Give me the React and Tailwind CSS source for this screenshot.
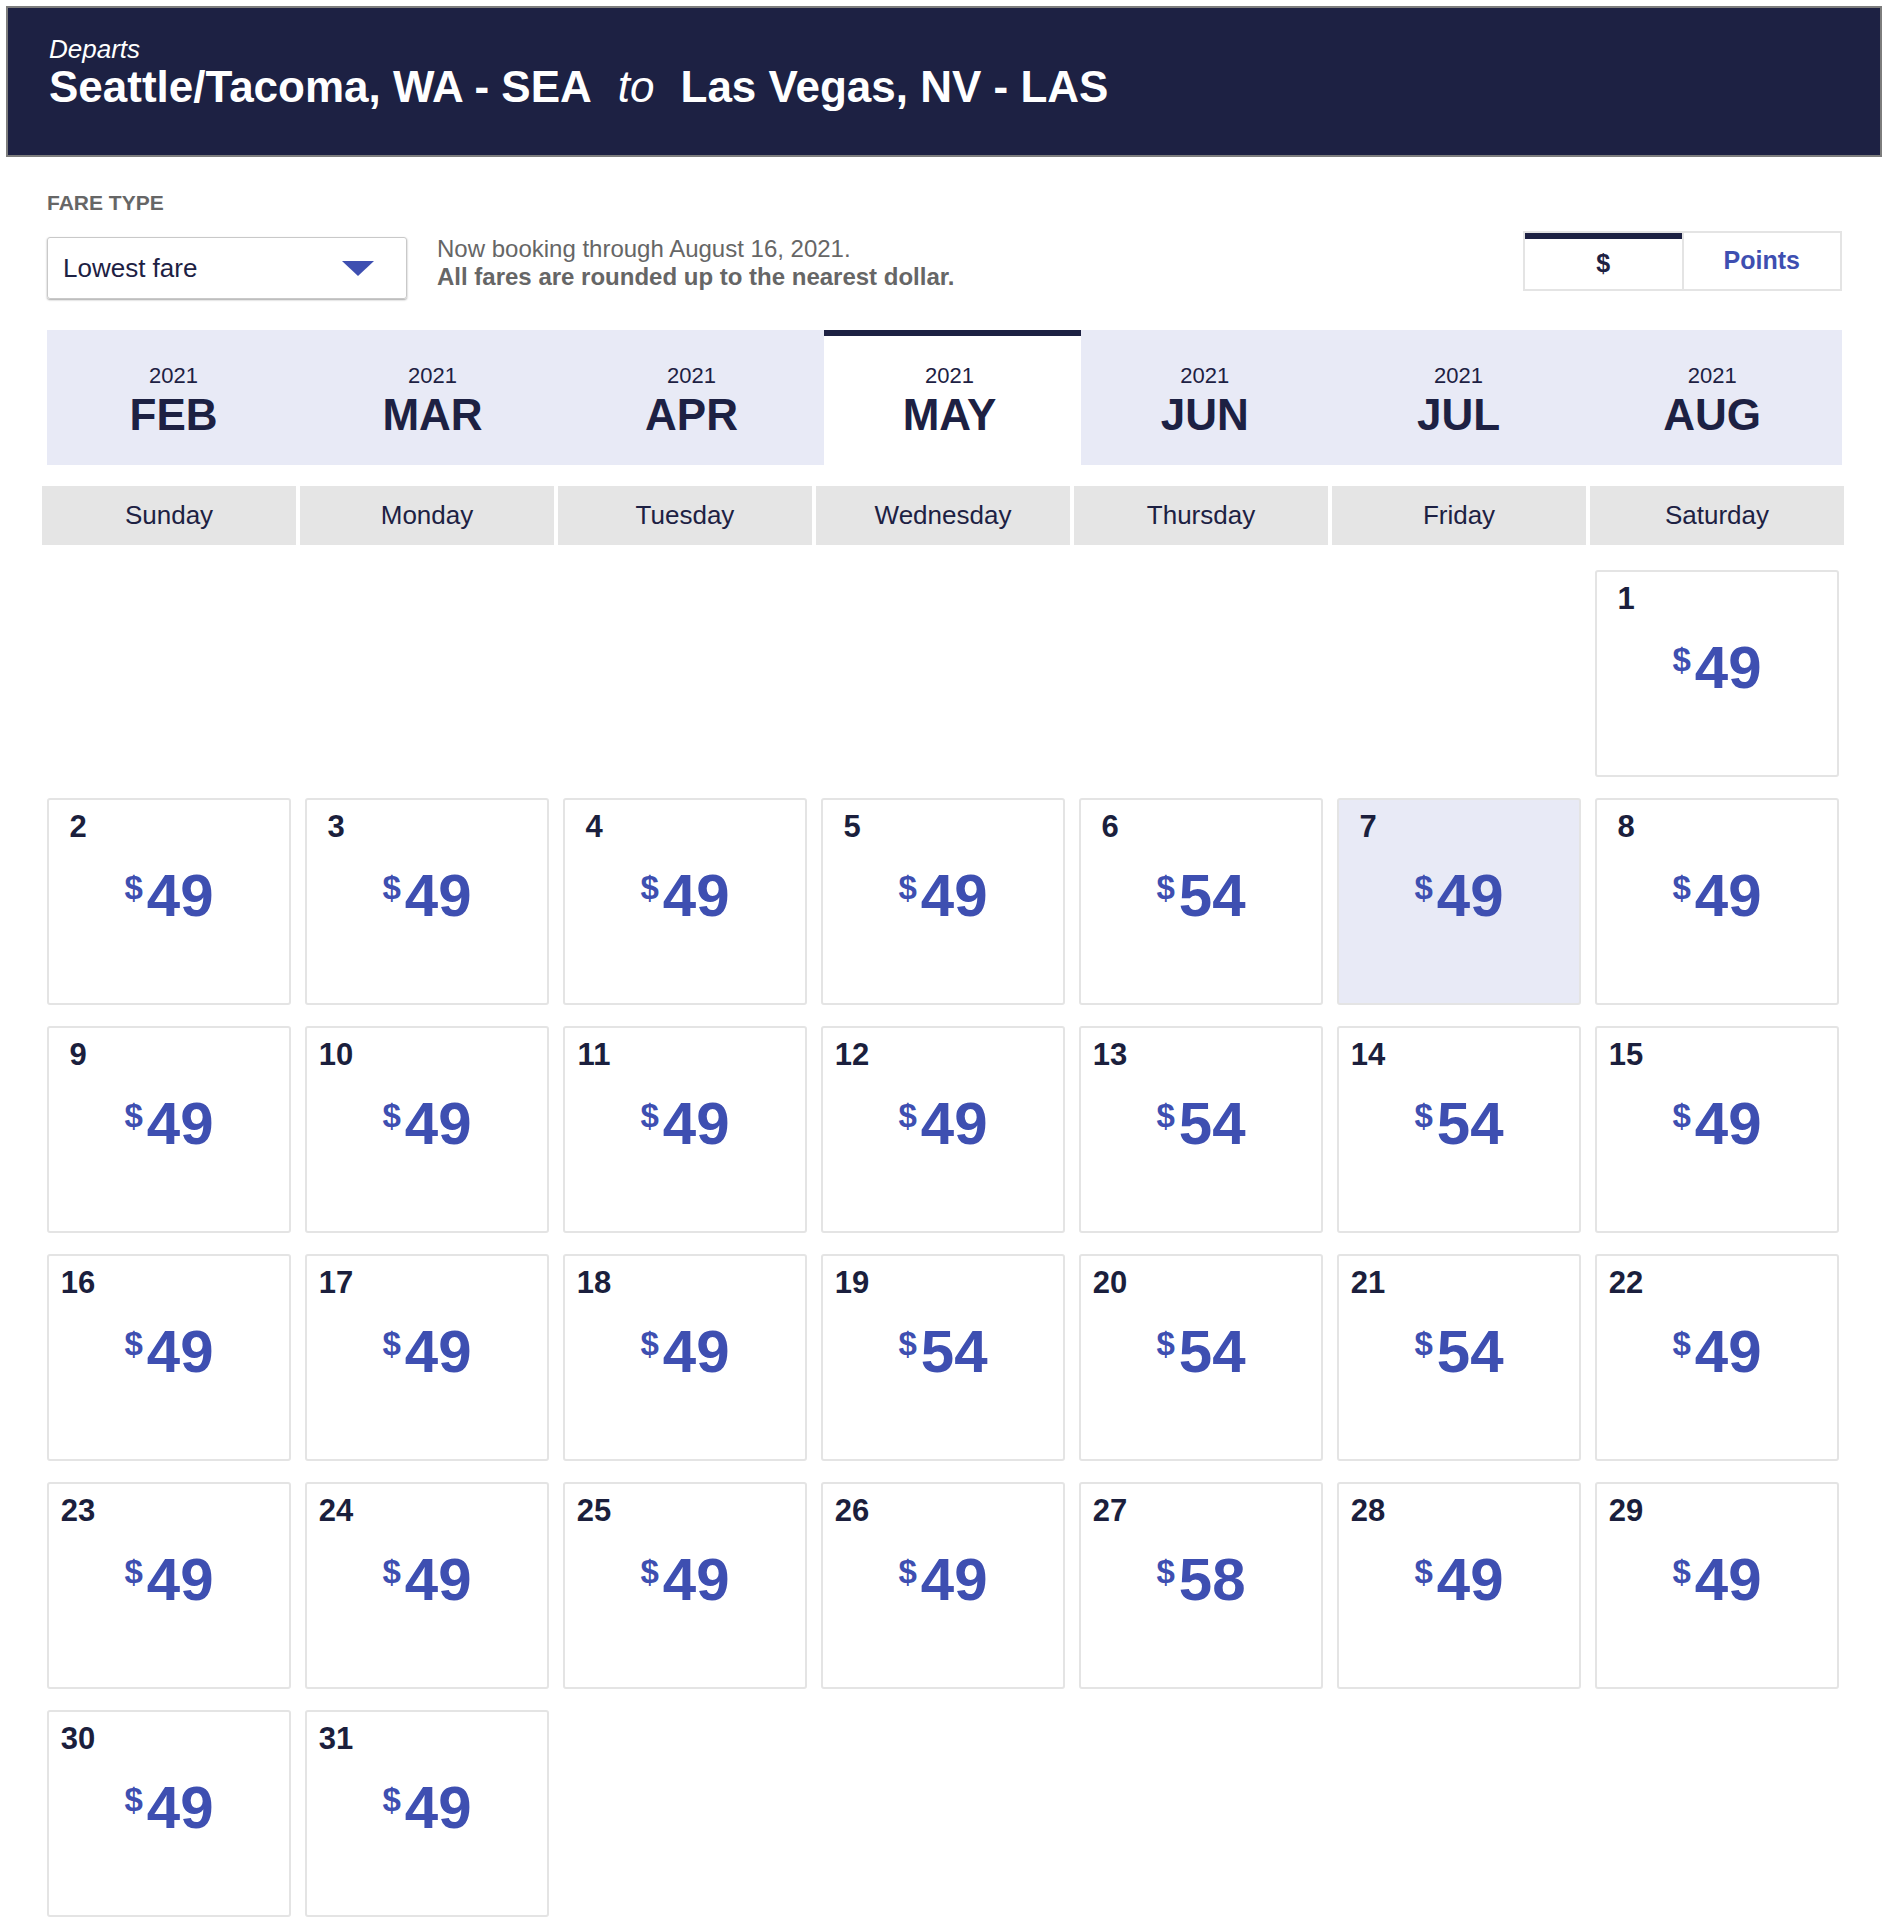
import { useState } from "react";

const MONTHS = ["FEB", "MAR", "APR", "MAY", "JUN", "JUL", "AUG"];
const DAYS = ["Sunday", "Monday", "Tuesday", "Wednesday", "Thursday", "Friday", "Saturday"];

// May 2021 fares, index = day - 1
const FARES = [
  49, 49, 49, 49, 49, 54, 49, 49, 49, 49, 49, 49, 54, 54, 49, 49, 49, 49, 54, 54,
  54, 49, 49, 49, 49, 49, 58, 49, 49, 49, 49,
];

function MonthTab({ label, active }) {
  return (
    <div
      className={
        active
          ? "flex flex-col items-center bg-white border-t-[6px] border-[#1d2143] pt-[29px] pr-[6px]"
          : "flex flex-col items-center pt-[35px] pr-[6px]"
      }
    >
      <div className="text-[22px] leading-[22px]">2021</div>
      <div className="mt-[6px] text-[44px] leading-[44px] font-bold">{label}</div>
    </div>
  );
}

function DayCell({ day, fare, selected }) {
  return (
    <div
      className={`h-[207px] rounded-[3px] border-2 border-[#e4e4e4] pt-[11px] pl-[10px] ${
        selected ? "bg-[#e8eaf6]" : "bg-white"
      }`}
    >
      <div className="w-[38px] text-center text-[31px] leading-[31px] font-bold text-[#1b1f3d]">
        {day}
      </div>
      <div className="mt-[24px] flex justify-center pr-[10px] text-[#3e4fb1] font-bold">
        <span className="mt-[5px] text-[33px] leading-[33px]">$</span>
        <span className="ml-[4px] text-[60px] leading-[60px]">{fare}</span>
      </div>
    </div>
  );
}

export default function App() {
  const [selectedDay] = useState(7);
  const blanks = Array.from({ length: 6 });

  return (
    <div className="w-[1888px] min-h-[1928px] bg-white px-[6px] pt-[6px] font-['Liberation_Sans',Arial,sans-serif] text-[#1d2143]">
      <div className="h-[151px] border-2 border-[#7d7d7d] bg-[#1d2143] pl-[41px] pt-[28px] text-white">
        <div className="text-[26px] leading-[26px] italic">Departs</div>
        <div className="mt-[3px] flex whitespace-pre text-[44px] leading-[44px] font-bold">
          <span>Seattle/Tacoma, WA - SEA</span>
          <span className="mx-[26px] font-normal italic">to</span>
          <span>Las Vegas, NV - LAS</span>
        </div>
      </div>

      <div className="pl-[41px] pr-[40px]">
        <div className="mt-[35px] flex items-start justify-between">
          <div>
            <div className="text-[21px] leading-[21px] font-bold text-[#666666]">FARE TYPE</div>
            <div className="mt-[24px] flex items-start">
              <div className="flex h-[62px] w-[360px] items-center justify-between rounded-[3px] border border-[#c9c9c9] pl-[15px] pr-[32px] shadow-[0_1px_2px_rgba(0,0,0,0.35)]">
                <span className="text-[26px] leading-[26px] text-[#1d2143]">Lowest fare</span>
                <svg width="32" height="15" viewBox="0 0 32 15">
                  <polygon points="0,0 32,0 16,15" fill="#3e4fb1" />
                </svg>
              </div>
              <div className="ml-[30px] -mt-[2px] text-[24px] leading-[28px] text-[#666666]">
                <div>Now booking through August 16, 2021.</div>
                <div className="font-bold">All fares are rounded up to the nearest dollar.</div>
              </div>
            </div>
          </div>

          <div className="mt-[39px] flex h-[60px] w-[319px] border-2 border-[#e4e4e4]">
            <div className="flex flex-1 items-center justify-center border-t-[6px] border-[#1d2143] text-[25px] font-bold text-[#1d2143]">
              $
            </div>
            <div className="w-[2px] bg-[#e4e4e4]" />
            <div className="flex flex-1 items-center justify-center text-[25px] font-bold text-[#3e4fb1]">
              Points
            </div>
          </div>
        </div>

        <div className="mt-[31px] grid h-[135px] grid-cols-[259px_259px_259px_257px_1fr_1fr_1fr] bg-[#e8eaf6]">
          {MONTHS.map((m) => (
            <MonthTab key={m} label={m} active={m === "MAY"} />
          ))}
        </div>

        <div className="-ml-[5px] -mr-[2px] mt-[21px] grid h-[59px] grid-cols-7 gap-[4px]">
          {DAYS.map((d) => (
            <div
              key={d}
              className="flex items-center justify-center bg-[#e5e5e5] text-[26px] text-[#1d2143]"
            >
              {d}
            </div>
          ))}
        </div>

        <div className="mt-[25px] grid w-[1792px] grid-cols-7 gap-x-[14px] gap-y-[21px]">
          {blanks.map((_, i) => (
            <div key={`b${i}`} className="h-[207px]" />
          ))}
          {FARES.map((fare, i) => (
            <DayCell key={i} day={i + 1} fare={fare} selected={i + 1 === selectedDay} />
          ))}
        </div>
      </div>
    </div>
  );
}
